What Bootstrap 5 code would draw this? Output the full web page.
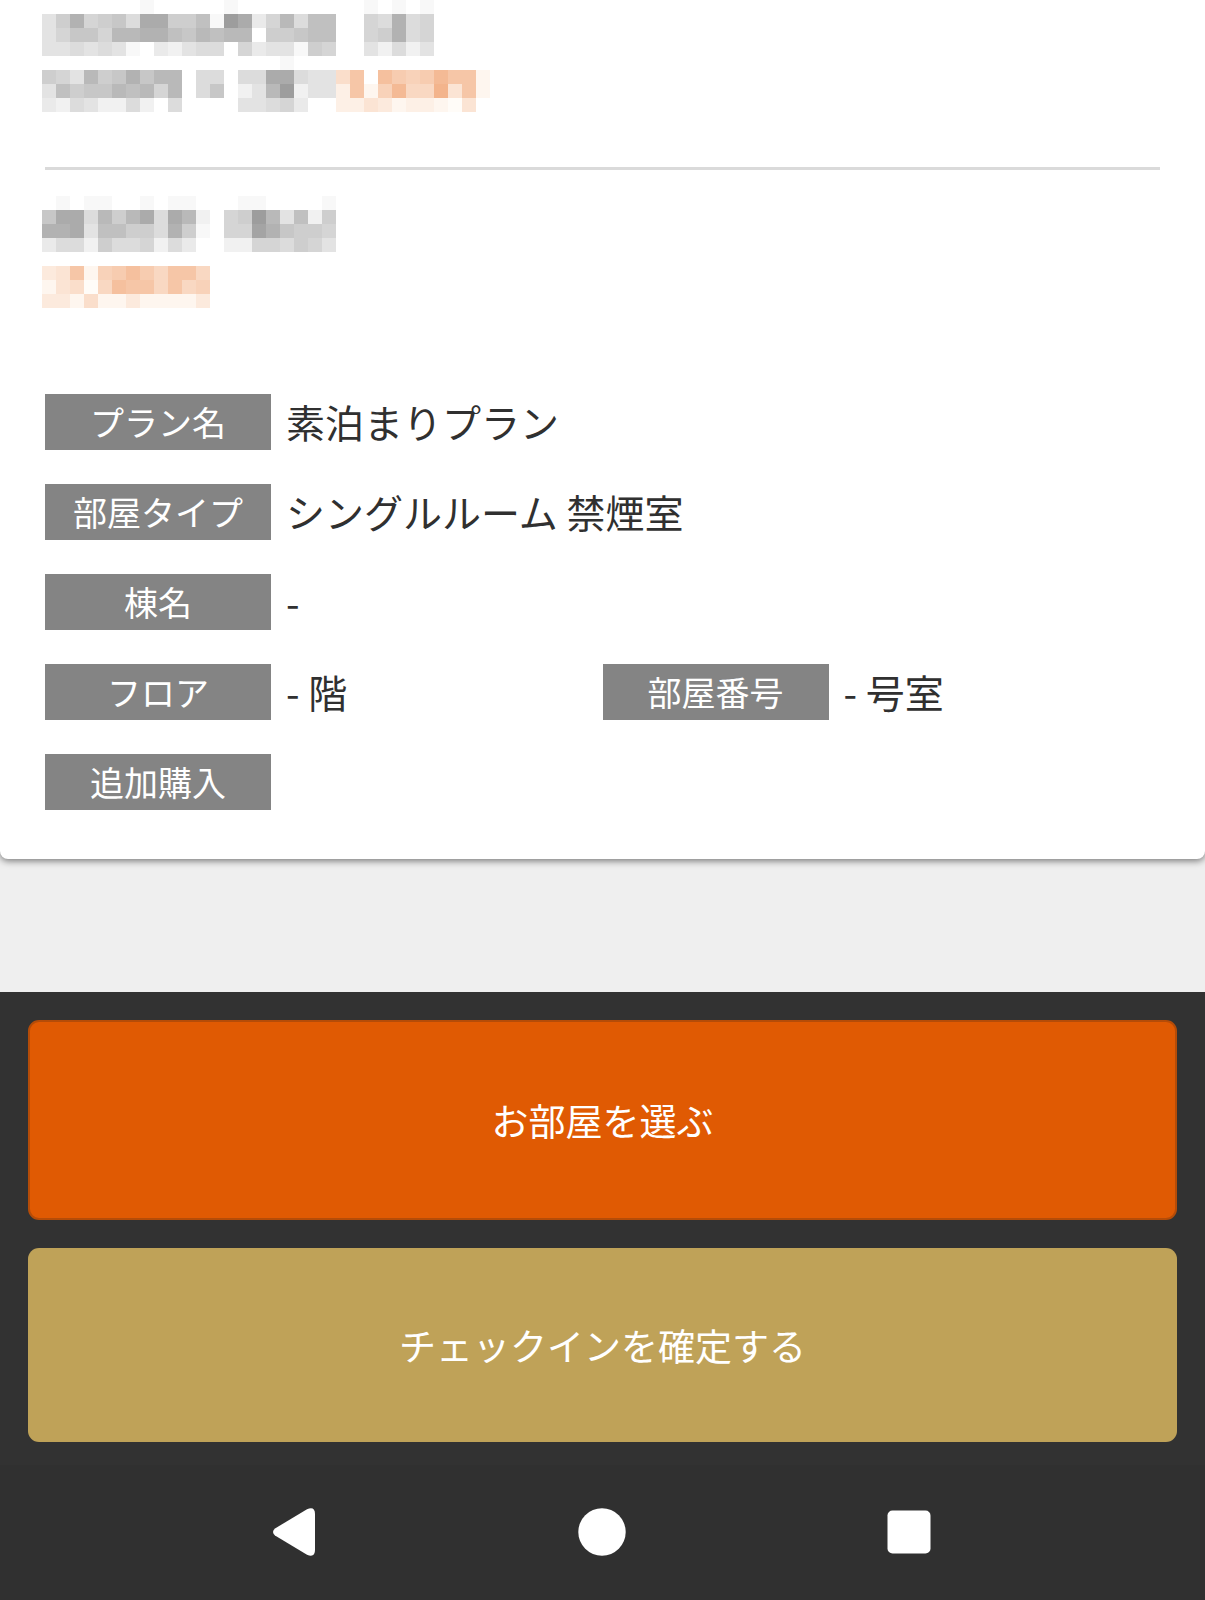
<!DOCTYPE html>
<html lang="ja">
<head>
<meta charset="utf-8">
<meta name="viewport" content="width=device-width, initial-scale=1">
<title>チェックイン</title>
<link href="https://cdn.jsdelivr.net/npm/bootstrap@5.3.0/dist/css/bootstrap.min.css" rel="stylesheet">
<style>
  body {
    background: #efefef;
    color: #303030;
    font-family: "Noto Sans CJK JP", sans-serif;
  }
  .stay-panel {
    border: 0;
    border-radius: 0 0 8px 8px;
    box-shadow: 0 2px 7px rgba(0, 0, 0, .5);
    padding: 0 42px 49px;
  }
  .masked { display: block; max-width: 100%; }
  .stay-panel > .stay-rule {
    margin: 55px 3px 26px;
    border-top: 3px solid #dadada;
    opacity: 1;
  }
  .stay-list { margin: 86px 3px 0; row-gap: 34px; }
  .stay-tag {
    width: 226px;
    flex: none;
    line-height: 56px;
    font-size: 34px;
    font-weight: 400;
    background: #848484;
    color: #fff;
    text-align: center;
  }
  .stay-value {
    padding-left: 15px;
    line-height: 54px;
    font-size: 39px;
  }
  .page-main { padding-bottom: 133px; }
  .action-bar { background: #323232; padding: 28px 28px 23px; gap: 28px; }
  .action-btn {
    --bs-btn-color: #fff;
    --bs-btn-hover-color: #fff;
    --bs-btn-active-color: #fff;
    --bs-btn-font-size: 37px;
    --bs-btn-line-height: 54px;
    --bs-btn-padding-y: 70px;
    --bs-btn-border-radius: 11px;
    --bs-btn-border-width: 0;
  }
  .action-choose {
    --bs-btn-bg: #e05a03;
    --bs-btn-hover-bg: #cf5303;
    --bs-btn-active-bg: #c04d03;
    --bs-btn-padding-y: 71px;
    --bs-btn-border-width: 2px;
    --bs-btn-border-color: #b54c08;
    --bs-btn-hover-border-color: #b54c08;
  }
  .action-confirm {
    --bs-btn-bg: #bfa258;
    --bs-btn-hover-bg: #b1954d;
    --bs-btn-active-bg: #a58a45;
  }
  .system-nav { background: #303030; padding: 0 142px 2px 140px; height: 135px; }
  .system-nav .btn { border: 0; border-radius: 0; flex: 1 1 0; }
</style>
</head>
<body>
<main class="page-main">
  <section class="card stay-panel">
    <svg class="masked" width="448" height="112" viewBox="0 0 448 112" role="img" aria-label="非表示の予約情報"
      data-rows="00000001000001000000000101010000
47b6785cc7791ec36a5990065b560000
46886aabb98a9aa0778990067b560000
4454541032455063441760042524
00000000000000000100000000000000
764a78b8aa055055cc544lp0qonorpph
49788a9a6a058024ae244iphnrmmskph
325422520500004456300iikjhiihgk0"></svg>
    <hr class="stay-rule">
    <svg class="masked" width="448" height="112" viewBox="0 0 448 112" role="img" aria-label="非表示の料金情報"
      data-rows="010110010110001100001
8cc5a7ac5ca2067ea4927
bbc499775b71066db8776
355275562530022665764
0
jkphnoqomppm
hklgmqppmpmn
jjhlhhjhhhhj"></svg>

    <dl class="row g-0 stay-list mb-0">
      <div class="col-12 d-flex"><dt class="stay-tag">プラン名</dt><dd class="stay-value mb-0">素泊まりプラン</dd></div>
      <div class="col-12 d-flex"><dt class="stay-tag">部屋タイプ</dt><dd class="stay-value mb-0">シングルルーム 禁煙室</dd></div>
      <div class="col-12 d-flex"><dt class="stay-tag">棟名</dt><dd class="stay-value mb-0">-</dd></div>
      <div class="col-6 d-flex"><dt class="stay-tag">フロア</dt><dd class="stay-value mb-0">- 階</dd></div>
      <div class="col-6 d-flex"><dt class="stay-tag">部屋番号</dt><dd class="stay-value mb-0">- 号室</dd></div>
      <div class="col-12 d-flex"><dt class="stay-tag">追加購入</dt><dd class="stay-value mb-0"></dd></div>
    </dl>
  </section>
</main>

<footer>
  <div class="action-bar d-flex flex-column">
    <button type="button" class="btn action-btn action-choose">お部屋を選ぶ</button>
    <button type="button" class="btn action-btn action-confirm">チェックインを確定する</button>
  </div>
  <nav class="system-nav d-flex align-items-center">
    <button type="button" class="btn" aria-label="戻る">
      <svg width="48" height="48" viewBox="0 0 48 48"><path fill="#fff" d="M37 1.200 L5 20.500 Q1 24 5 27.500 L37 46.800 Q45 50 45 42 V6 Q45 -2 37 1.200Z"/></svg>
    </button>
    <button type="button" class="btn" aria-label="ホーム">
      <svg width="48" height="48" viewBox="0 0 48 48"><circle cx="24" cy="24" r="23.700" fill="#fff"/></svg>
    </button>
    <button type="button" class="btn" aria-label="履歴">
      <svg width="48" height="48" viewBox="0 0 48 48"><rect x="2.500" y="2.500" width="43" height="43" rx="5" fill="#fff"/></svg>
    </button>
  </nav>
</footer>

<script src="https://cdn.jsdelivr.net/npm/bootstrap@5.3.0/dist/js/bootstrap.bundle.min.js"></script>
<script>
  // Masked personal data: 0-f are grey shades, g-v are orange shades, one 14px tile each.
  document.querySelectorAll('.masked').forEach(function (svg) {
    svg.dataset.rows.split('\n').forEach(function (line, y) {
      Array.from(line).forEach(function (ch, x) {
        var n = parseInt(ch, 36);
        if (n === 0) return;
        var k = n - 16;
        var fill = n < 16
          ? 'rgb(' + [255 - 7 * n, 255 - 7 * n, 255 - 7 * n] + ')'
          : 'rgb(' + [255 - k, 252 - 6 * k, 248 - 9 * k] + ')';
        var tile = document.createElementNS('http://www.w3.org/2000/svg', 'rect');
        tile.setAttribute('x', x * 14);
        tile.setAttribute('y', y * 14);
        tile.setAttribute('width', 14);
        tile.setAttribute('height', 14);
        tile.setAttribute('fill', fill);
        svg.appendChild(tile);
      });
    });
  });
</script>
</body>
</html>
